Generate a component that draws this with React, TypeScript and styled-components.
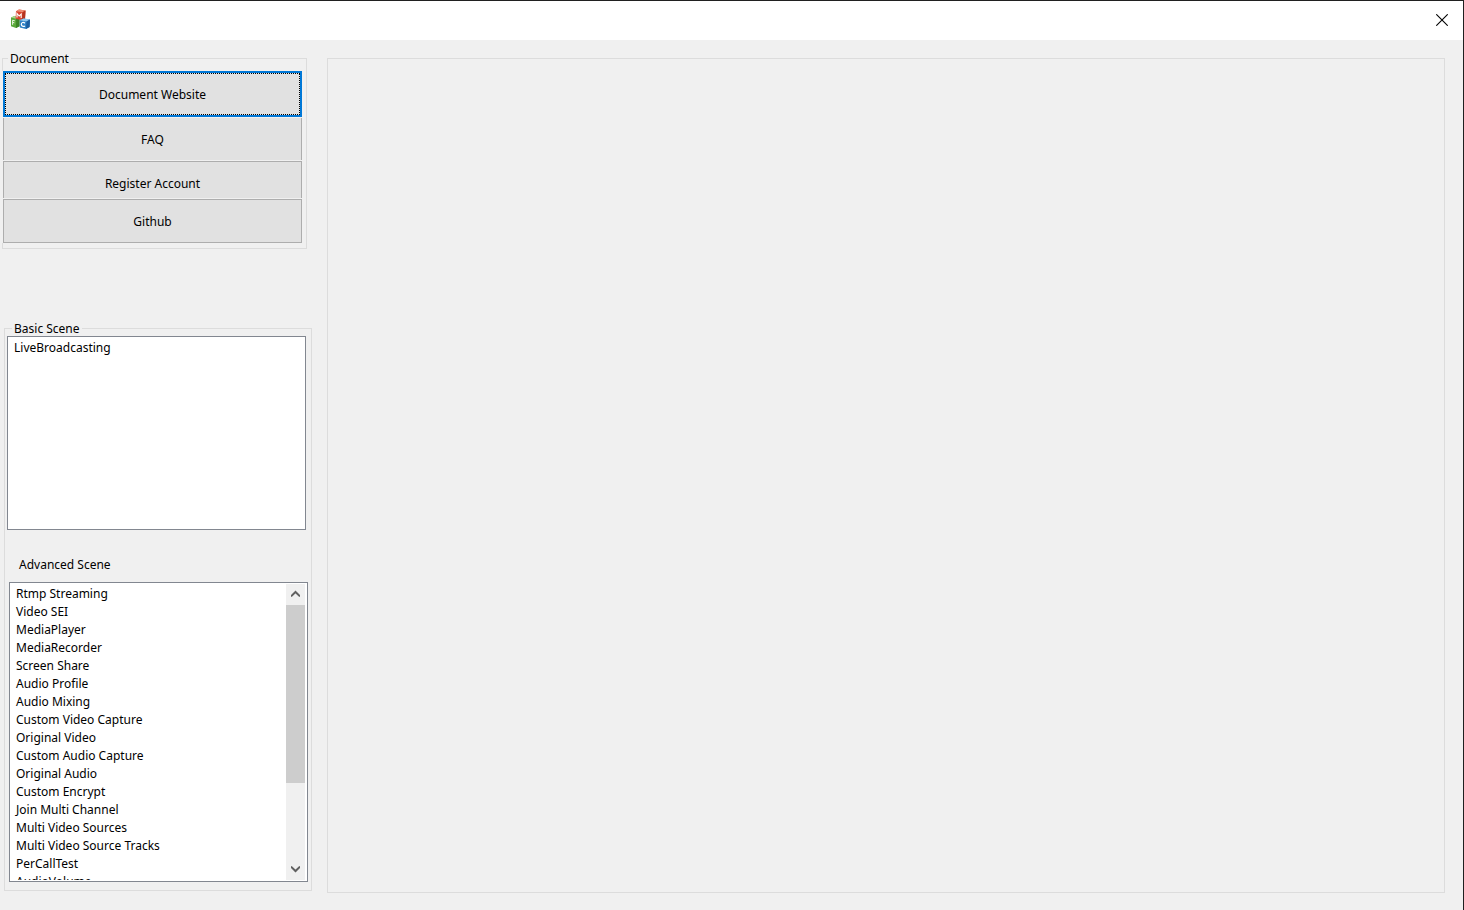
import React, { useRef } from "react";
import styled, { createGlobalStyle, css } from "styled-components";

const colors = {
  face: "#f0f0f0",
  frame: "#202020",
  groupLine: "#dcdcdc",
  button: "#e1e1e1",
  buttonLine: "#adadad",
  accent: "#0078d7",
  listLine: "#828790",
  thumb: "#cdcdcd",
};

const GlobalStyle = createGlobalStyle`
  *, *::before, *::after { box-sizing: border-box; }
  body {
    margin: 0;
    background: ${colors.face};
    color: #000;
    font: 12px/15px "Noto Sans", sans-serif;
  }
  button, select { font: inherit; color: inherit; }
`;

const Window = styled.div`
  display: flex;
  flex-direction: column;
  height: 100vh;
  min-height: 700px;
  border-top: 1px solid ${colors.frame};
  border-right: 1px solid ${colors.frame};
`;

const TitleBar = styled.header`
  display: flex;
  flex: none;
  align-items: center;
  justify-content: space-between;
  height: 39px;
  padding: 0 0 2px 10px;
  background: #fff;
`;

const CloseButton = styled.button`
  display: flex;
  align-items: center;
  justify-content: center;
  width: 42px;
  height: 36px;
  padding: 0;
  border: 0;
  background: none;
`;

const Client = styled.div`
  display: flex;
  flex: 1;
  min-height: 0;
`;

const Sidebar = styled.aside`
  display: flex;
  flex: none;
  flex-direction: column;
  gap: 72px;
  width: 327px;
  padding: 11px 0 19px;
`;

const Group = styled.fieldset`
  display: flex;
  flex-direction: column;
  min-width: 0;
  margin: 0;
  padding: 0;
  border: 1px solid ${colors.groupLine};
`;

const DocumentGroup = styled(Group)`
  width: 305px;
  margin-left: 2px;
  padding: 5px 0;
`;

const SceneGroup = styled(Group)`
  flex: 1;
  min-height: 0;
  width: 308px;
  margin-left: 4px;
  padding: 0 3px 8px 2px;
`;

const Legend = styled.legend`
  height: 15px;
  margin-left: 5px;
  padding: 0 2px;
`;

const ButtonStack = styled.div`
  display: flex;
  flex-direction: column;
  gap: 1px;
  width: 300px;
  margin-left: -1px;
  padding-left: 1px;
  background: ${colors.face};
`;

type Edge = "focused" | "sides" | "open" | "closed";

const edges = {
  focused: css`
    height: 46px;
    border: 2px solid ${colors.accent};
    outline: 1px dotted #000;
    outline-offset: -3px;
  `,
  sides: css`
    height: 42px;
    border-width: 0 1px;
  `,
  open: css`
    height: 37px;
    padding-top: 7px;
    border-bottom-width: 0;
  `,
  closed: css`
    height: 44px;
  `,
};

const PushButton = styled.button<{ $edge: Edge }>`
  padding: 0;
  border: 1px solid ${colors.buttonLine};
  border-radius: 0;
  background: ${colors.button};
  ${({ $edge }) => edges[$edge]}
`;

const ListFrame = styled.div<{ $fill?: boolean }>`
  display: flex;
  flex: ${({ $fill }) => ($fill ? "1 1 0" : "none")};
  width: 299px;
  height: ${({ $fill }) => ($fill ? "auto" : "194px")};
  min-height: 0;
  margin-left: ${({ $fill }) => ($fill ? "2px" : "0")};
  padding: 1px;
  border: 1px solid ${colors.listLine};
  background: #fff;
`;

const ListBox = styled.select`
  flex: 1;
  min-width: 0;
  height: 100%;
  margin: 0;
  padding: 0;
  border: 0;
  border-radius: 0;
  outline: 0;
  background: #fff;
  overflow-y: auto;
  scrollbar-width: none;

  option {
    display: block;
    height: 18px;
    padding: 1px 5px 0;
  }
`;

const ListLabel = styled.label`
  margin: 27px 0 10px 12px;
`;

const ScrollBar = styled.div`
  display: flex;
  flex: none;
  flex-direction: column;
  width: 20px;
  padding-right: 1px;
  background: linear-gradient(to right, ${colors.face} 19px, #fff 19px);
`;

const ScrollButton = styled.button`
  display: flex;
  flex: none;
  align-items: center;
  justify-content: center;
  height: 21px;
  padding: 0 0 1px;
  border: 0;
  background: none;
`;

const Track = styled.div`
  flex: 1;
`;

const Thumb = styled.div`
  height: 70%;
  background: ${colors.thumb};
`;

const Workspace = styled.main`
  flex: 1;
  min-width: 0;
  margin: 18px 18px 17px 0;
  border: 1px solid ${colors.groupLine};
`;

const documentLinks: { label: string; edge: Edge }[] = [
  { label: "Document Website", edge: "focused" },
  { label: "FAQ", edge: "sides" },
  { label: "Register Account", edge: "open" },
  { label: "Github", edge: "closed" },
];

const basicScenes = ["LiveBroadcasting"];

const advancedScenes = [
  "Rtmp Streaming",
  "Video SEI",
  "MediaPlayer",
  "MediaRecorder",
  "Screen Share",
  "Audio Profile",
  "Audio Mixing",
  "Custom Video Capture",
  "Original Video",
  "Custom Audio Capture",
  "Original Audio",
  "Custom Encrypt",
  "Join Multi Channel",
  "Multi Video Sources",
  "Multi Video Source Tracks",
  "PerCallTest",
  "AudioVolume",
];

/* Three stacked cubes: red on top, green and blue below. */
const AppIcon = () => (
  <svg width="21" height="21" viewBox="0 0 21 21" aria-hidden="true">
    <path d="M1 8.6 L4.5 7 L9.5 8 V17.3 L6 19 L1 17.3 Z" fill="#5aa83a" />
    <path d="M1 8.6 L4.5 7 L9.5 8 L6.2 9.8 Z" fill="#a9d68a" />
    <path d="M6.2 9.8 L9.5 8 V17.3 L6 19 Z" fill="#3c8426" />
    <path d="M4.8 11.8 L2.6 11.2 V15.8 M2.6 13.4 L4.4 13.8" fill="none" stroke="#e9f6e0" strokeWidth="1" />
    <path d="M6 2.2 L9 0.6 L15.5 1.6 L15 9.6 L12 11.2 L5.6 9.8 Z" fill="#d8452f" />
    <path d="M6 2.2 L9 0.6 L15.5 1.6 L12.6 3.3 Z" fill="#ee8c74" />
    <path d="M12.6 3.3 L15.5 1.6 L15 9.6 L12 11.2 Z" fill="#b5341f" />
    <path d="M7 8.4 V4.4 L9.2 7 L11.2 5 V9" fill="none" stroke="#fff" strokeWidth="1.1" />
    <path d="M9.8 11.2 L13.5 9.4 L20 10.4 L19.6 18 L16 20 L9.8 18.4 Z" fill="#2f82c6" />
    <path d="M9.8 11.2 L13.5 9.4 L20 10.4 L16.5 12.4 Z" fill="#93caef" />
    <path d="M16.5 12.4 L20 10.4 L19.6 18 L16 20 Z" fill="#1b5d9f" />
    <path d="M15 14.2 C13.4 12.8 11.2 13.4 11.3 15.4 C11.4 17.3 13.5 18 15 17" fill="none" stroke="#fff" strokeWidth="1.2" />
  </svg>
);

const CloseIcon = () => (
  <svg width="12" height="12" viewBox="0 0 12 12" aria-hidden="true">
    <path d="M0.3 0.3 L11.7 11.7 M11.7 0.3 L0.3 11.7" stroke="#000" strokeWidth="1.1" />
  </svg>
);

const Chevron = ({ down }: { down?: boolean }) => (
  <svg width="9" height="8" viewBox="0 0 9 8" aria-hidden="true">
    <path
      d={down ? "M0 1.6 L4.5 6 L9 1.6" : "M0 6.4 L4.5 2 L9 6.4"}
      fill="none"
      stroke="#606060"
      strokeWidth="2"
    />
  </svg>
);

export default function App() {
  const advancedList = useRef<HTMLSelectElement>(null);
  const scroll = (top: number) => advancedList.current?.scrollBy({ top });

  return (
    <>
      <GlobalStyle />
      <Window>
        <TitleBar>
          <AppIcon />
          <CloseButton type="button" aria-label="Close">
            <CloseIcon />
          </CloseButton>
        </TitleBar>
        <Client>
          <Sidebar>
            <DocumentGroup>
              <Legend>Document</Legend>
              <ButtonStack>
                {documentLinks.map(({ label, edge }) => (
                  <PushButton key={label} type="button" $edge={edge}>
                    {label}
                  </PushButton>
                ))}
              </ButtonStack>
            </DocumentGroup>
            <SceneGroup>
              <Legend id="basic-scene">Basic Scene</Legend>
              <ListFrame>
                <ListBox size={10} aria-labelledby="basic-scene">
                  {basicScenes.map((scene) => (
                    <option key={scene}>{scene}</option>
                  ))}
                </ListBox>
              </ListFrame>
              <ListLabel htmlFor="advanced-scene">Advanced Scene</ListLabel>
              <ListFrame $fill>
                <ListBox id="advanced-scene" size={16} ref={advancedList}>
                  {advancedScenes.map((scene) => (
                    <option key={scene}>{scene}</option>
                  ))}
                </ListBox>
                <ScrollBar>
                  <ScrollButton type="button" aria-label="Scroll up" onClick={() => scroll(-18)}>
                    <Chevron />
                  </ScrollButton>
                  <Track>
                    <Thumb />
                  </Track>
                  <ScrollButton type="button" aria-label="Scroll down" onClick={() => scroll(18)}>
                    <Chevron down />
                  </ScrollButton>
                </ScrollBar>
              </ListFrame>
            </SceneGroup>
          </Sidebar>
          <Workspace />
        </Client>
      </Window>
    </>
  );
}
